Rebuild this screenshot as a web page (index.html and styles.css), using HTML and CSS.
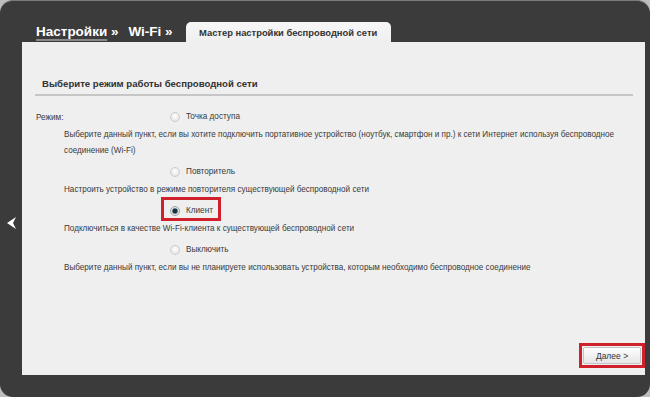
FILE: index.html
```html
<html><head>
<meta charset="UTF-8">
<meta name="viewport" content="width=device-width, initial-scale=1.0">
<title>Мастер настройки беспроводной сети</title>
<link rel="stylesheet" href="styles.css">
</head>
<body>
  <div class="frame">
    <div class="gutter">
      <svg class="back" width="9" height="12" viewBox="0 0 9 12">
        <polygon points="9,0 0,6 9,12 6,6" fill="#fff"/>
      </svg>
    </div>

    <div class="main">
      <div class="crumbs">
        <span class="crumb"><a href="#" class="crumb-link">Настройки</a> »</span>
        <span class="crumb">Wi-Fi »</span>
        <div class="tab">Мастер настройки беспроводной сети</div>
      </div>

      <div class="panel">
        <div class="panel-body">
          <h2 class="legend">Выберите режим работы беспроводной сети</h2>

          <div class="field">
            <div class="field-row">
              <span class="field-label">Режим:</span>
              <label class="opt"><span class="radio"></span>Точка доступа</label>
            </div>
            <p class="desc">Выберите данный пункт, если вы хотите подключить портативное устройство (ноутбук, смартфон и пр.) к сети Интернет используя беспроводное соединение (Wi-Fi)</p>

            <div class="opt-row">
              <label class="opt"><span class="radio"></span>Повторитель</label>
            </div>
            <p class="desc">Настроить устройство в режиме повторителя существующей беспроводной сети</p>

            <div class="opt-row">
              <label class="opt selected"><span class="radio checked"></span>Клиент</label>
            </div>
            <p class="desc">Подключиться в качестве Wi-Fi-клиента к существующей беспроводной сети</p>

            <div class="opt-row">
              <label class="opt"><span class="radio"></span>Выключить</label>
            </div>
            <p class="desc">Выберите данный пункт, если вы не планируете использовать устройства, которым необходимо беспроводное соединение</p>
          </div>
        </div>

        <div class="actions">
          <span class="mark">
            <button class="btn">Далее &gt;</button>
          </span>
        </div>
      </div>
    </div>
  </div>
</body></html>
```

FILE: styles.css
```css
:root {
  --frame-color: #3b3b3b;
  --panel-color: #efefef;
  --text-color: #3a3a3a;
  --mark-color: #d0202b;
}

body {
  margin: 0;
  background: #bdbdbd;
  font-family: 'Liberation Sans', Arial, sans-serif;
  color: var(--text-color);
}

.frame {
  width: 650px;
  height: 397px;
  box-sizing: border-box;
  background: var(--frame-color);
  border-radius: 13px;
  border-top: 1px solid #7a7a7a;
  display: flex;
  padding-right: 5px;
}

.gutter {
  width: 22px;
  display: flex;
  flex-direction: column;
  align-items: center;
  padding-top: 216px;
  box-sizing: border-box;
}

.main {
  flex: 1;
  display: flex;
  flex-direction: column;
  padding-top: 20px;
  padding-bottom: 22px;
}

.crumbs {
  height: 21px;
  display: flex;
  align-items: flex-end;
  padding-left: 14px;
}

.crumb {
  color: #fff;
  font-size: 13.5px;
  font-weight: 700;
  line-height: 20px;
  margin-right: 10px;
  white-space: nowrap;
}

.crumb-link {
  color: #fff;
  text-decoration: underline;
  text-decoration-color: #8a8a8a;
  text-decoration-thickness: 2px;
  text-underline-offset: 3px;
}

.tab {
  margin-left: 3px;
  width: 205px;
  height: 20px;
  background: linear-gradient(#f7f7f7, var(--panel-color));
  border-radius: 5px 5px 0 0;
  text-align: center;
  font-size: 9.4px;
  line-height: 21px;
  color: #333;
  font-weight: 600;
}

.panel {
  flex: 1;
  background: var(--panel-color);
  display: flex;
  flex-direction: column;
}

.panel-body {
  flex: 1;
  padding-top: 34px;
}

.legend {
  margin: 0 12px 0 13px;
  padding: 0 0 3px 7px;
  border-bottom: 2px solid #c6c6c6;
  font-size: 9.6px;
  font-weight: 700;
  line-height: 15px;
  color: #333;
}

.field {
  padding-left: 14px;
  margin-top: 11px;
}

.field-row,
.opt-row {
  height: 20px;
  display: flex;
  align-items: center;
}

.opt-row {
  margin-top: 2px;
  padding-left: 134px;
}

.field-label {
  width: 134px;
  font-size: 8.2px;
}

.opt {
  display: flex;
  align-items: center;
  gap: 6px;
  font-size: 8.2px;
  line-height: 16px;
}

.opt.selected {
  line-height: 12px;
  border: 3px solid var(--mark-color);
  padding: 5px 5px 1px 6px;
  margin: -8px -8px -4px -9px;
}

.radio {
  width: 8px;
  height: 8px;
  border-radius: 50%;
  border: 1px solid #cdcdcd;
  background: radial-gradient(circle at 50% 40%, #ffffff, #dedede);
}

.radio.checked {
  border-color: #9aa4aa;
  background: radial-gradient(circle, #16303d 0 2px, #6f8792 2.6px, #e4e4e4 3.4px);
}

.desc {
  margin: 0;
  padding-left: 28px;
  padding-right: 24px;
  font-size: 8.15px;
  line-height: 16px;
}

.desc + .opt-row {
  margin-top: 3px;
}

.actions {
  display: flex;
  justify-content: flex-end;
  padding-bottom: 7px;
}

.mark {
  border: 3px solid var(--mark-color);
  padding: 1px;
  display: flex;
}

.btn {
  width: 58px;
  height: 17px;
  padding: 0;
  border: 1px solid #c4c4c4;
  border-radius: 2px;
  background: linear-gradient(#fdfdfd, #e6e6e6);
  font-family: 'Liberation Sans', Arial, sans-serif;
  font-size: 8.5px;
  color: #333;
}
```
